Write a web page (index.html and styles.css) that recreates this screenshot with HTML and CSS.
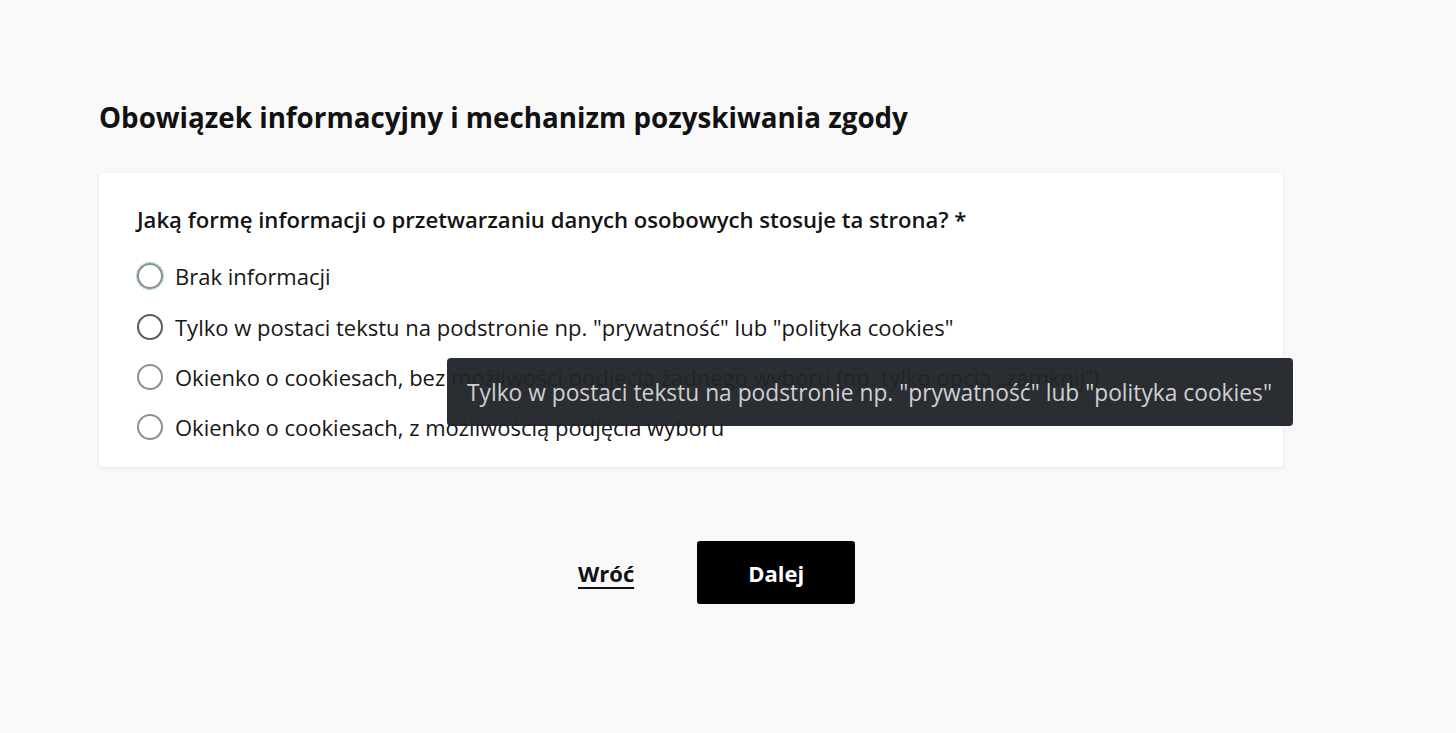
FILE: index.html
```html
<!DOCTYPE html>
<html lang="pl">
<head>
<meta charset="utf-8">
<title>Obowiązek informacyjny</title>
<link rel="stylesheet" href="styles.css">
</head>
<body>
<main class="page">
  <h1 class="title">Obowiązek informacyjny i mechanizm pozyskiwania zgody</h1>
  <section class="card">
    <p class="question">Jaką formę informacji o przetwarzaniu danych osobowych stosuje ta strona? *</p>
    <ul class="options">
      <li class="option"><span class="radio focus"></span><span class="label">Brak informacji</span></li>
      <li class="option hover"><span class="radio"></span><span class="label">Tylko w postaci tekstu na podstronie np. "prywatność" lub "polityka cookies"</span></li>
      <li class="option"><span class="radio"></span><span class="label">Okienko o cookiesach, bez możliwości podjęcia żadnego wyboru (np. tylko opcja „zamknij”)</span></li>
      <li class="option"><span class="radio"></span><span class="label">Okienko o cookiesach, z możliwością podjęcia wyboru</span></li>
    </ul>
    <div class="tooltip">Tylko w postaci tekstu na podstronie np. "prywatność" lub "polityka cookies"</div>
  </section>
  <div class="actions">
    <a class="back" href="#">Wróć</a>
    <button class="next" type="button">Dalej</button>
  </div>
</main>
</body>
</html>
```
FILE: styles.css
```css
* { box-sizing: border-box; }
html, body { margin: 0; padding: 0; }
body {
  background: #f9f9f9;
  font-family: "Open Sans", "Noto Sans", sans-serif;
  color: #111;
  width: 1456px;
  height: 733px;
  overflow: hidden;
}
.page {
  padding: 98px 0 0 99px;
  width: 1283px;
}
.title {
  margin: 0;
  font-size: 27.75px;
  font-weight: 700;
  line-height: 38px;
  color: #111;
}
.card {
  position: relative;
  margin-top: 37px;
  background: #fff;
  border-radius: 4px;
  box-shadow: 0 1px 4px rgba(0,0,0,0.09);
  padding: 30px 38px 14px;
  height: 294px;
}
.question {
  margin: 0 0 16px;
  font-size: 22.1px;
  font-weight: 600;
  line-height: 32px;
  color: #141414;
}
.options {
  list-style: none;
  margin: 0;
  padding: 0;
}
.option {
  display: flex;
  align-items: center;
  gap: 12px;
  height: 50.4px;
}
.radio {
  width: 26px;
  height: 26px;
  border: 2.75px solid #8f8c98;
  border-radius: 50%;
  flex: none;
}
.radio.focus { outline: 1px dotted #4fb8b0; outline-offset: 0; }
.option.hover .radio { border-color: #5c5963; }
.label {
  font-size: 22px;
  line-height: 30px;
  color: #161616;
}
.tooltip {
  position: absolute;
  left: 348px;
  top: 185px;
  height: 68px;
  padding: 0 21px 0 20px;
  display: flex;
  align-items: center;
  background: rgba(33, 36, 41, 0.96);
  color: #cfd0d3;
  font-size: 22.75px;
  border-radius: 4px;
  white-space: nowrap;
}
.actions {
  display: flex;
  align-items: center;
  gap: 63px;
  margin-top: 74px;
  padding-left: 479px;
}
.back {
  font-size: 22px;
  font-weight: 700;
  color: #111;
  text-decoration: underline;
  text-underline-offset: 5px;
  text-decoration-thickness: 2px;
}
.next {
  width: 158px;
  height: 63px;
  background: #000;
  color: #fff;
  border: 0;
  border-radius: 3px;
  font-family: inherit;
  font-size: 22px;
  font-weight: 700;
}
```
